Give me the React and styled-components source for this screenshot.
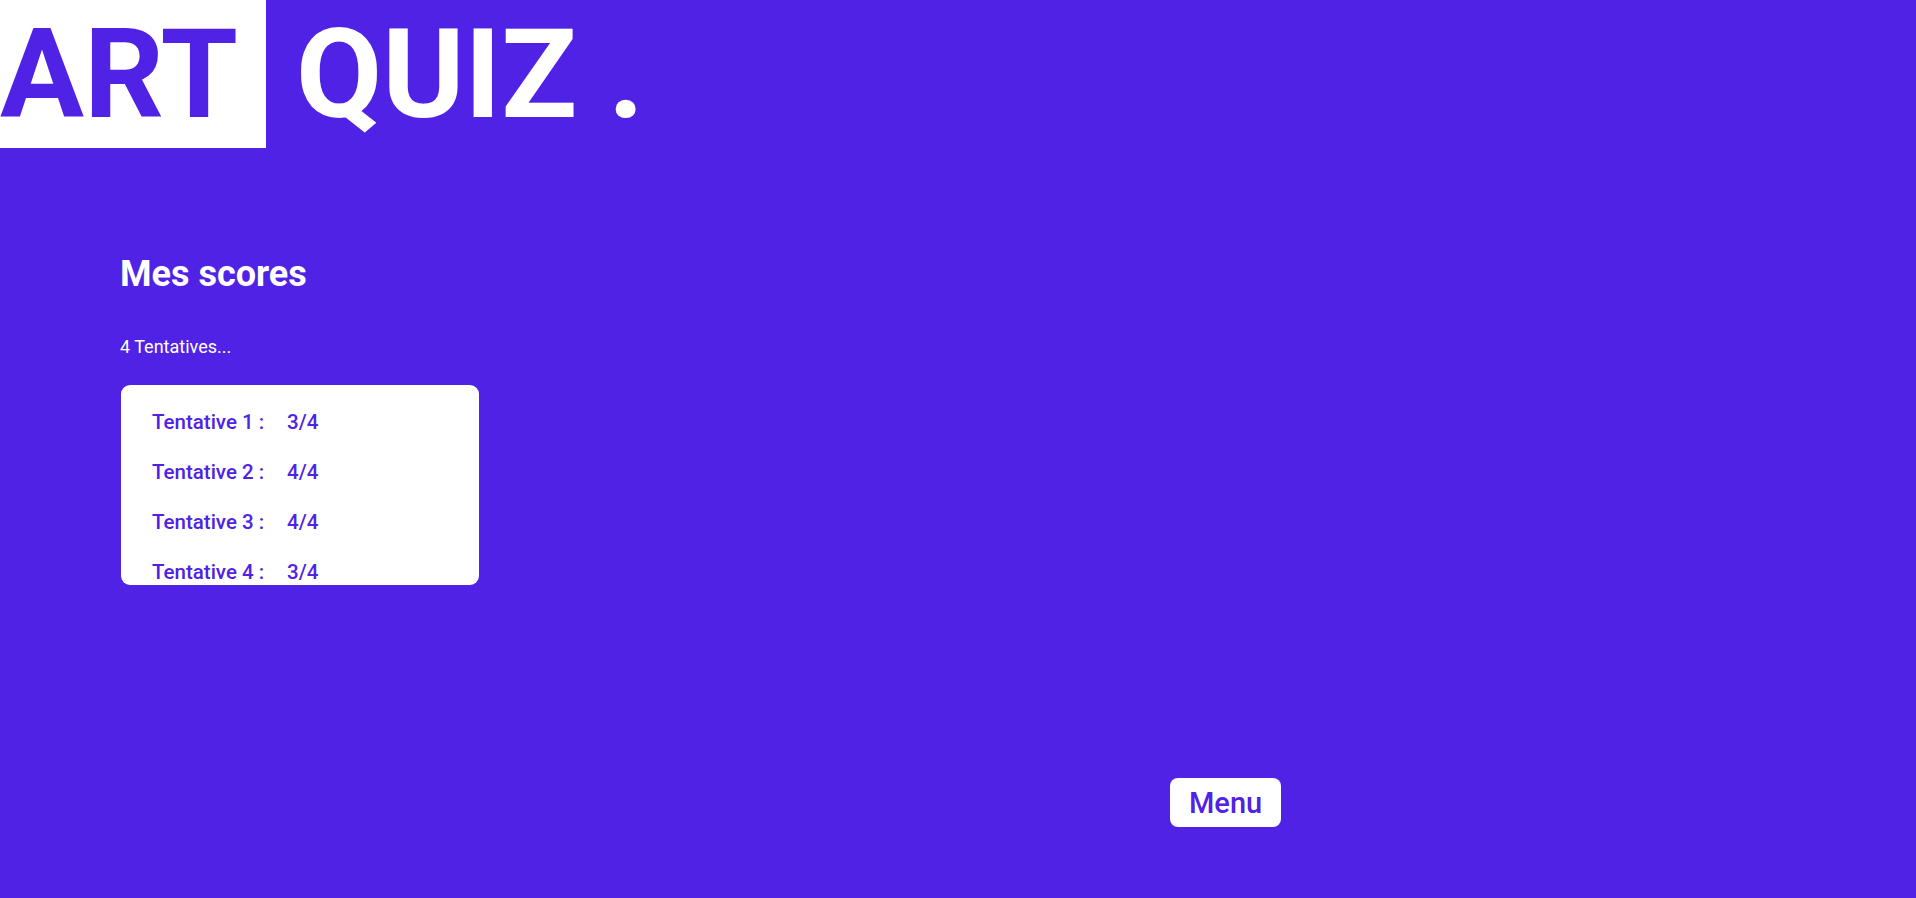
import React from 'react';
import styled, { createGlobalStyle } from 'styled-components';

const violet = '#5022e6';

const GlobalStyle = createGlobalStyle`
  html, body {
    margin: 0;
    padding: 0;
    background-color: ${violet};
    font-family: Roboto, "Liberation Sans", Arial, sans-serif;
  }
  #root {
    min-height: 100vh;
  }
`;

const Page = styled.div`
  min-height: 100vh;
  background-color: ${violet};
  display: flex;
  flex-direction: column;
`;

const Header = styled.header`
  display: flex;
  align-items: flex-start;
  height: 148px;
`;

const ArtBox = styled.div`
  width: 266px;
  height: 148px;
  flex-shrink: 0;
  background-color: white;
`;

const LogoText = styled.span`
  display: inline-block;
  font-size: 125px;
  font-weight: 700;
  line-height: 125px;
  padding-top: 12px;
  white-space: nowrap;
  color: ${({ $light }) => ($light ? 'white' : violet)};
  margin-left: ${({ $offset }) => $offset || 0}px;
`;

const Main = styled.main`
  padding: 105px 0 0 120px;
  display: flex;
  flex-direction: column;
  align-items: flex-start;
`;

const Title = styled.h2`
  margin: 0;
  font-size: 36px;
  font-weight: 700;
  color: white;
`;

const Count = styled.p`
  margin: 41px 0 0;
  font-size: 18px;
  color: white;
`;

const ScoreCard = styled.ul`
  list-style: none;
  margin: 28px 0 0 1px;
  padding: 12px 30px 0 31px;
  width: 358px;
  height: 200px;
  box-sizing: border-box;
  background-color: white;
  border-radius: 9px;
  overflow: hidden;
`;

const ScoreRow = styled.li`
  display: flex;
  height: 50px;
  line-height: 50px;
  font-size: 20.5px;
  font-weight: 500;
  color: ${violet};
`;

const Label = styled.span`
  width: 135px;
`;

const Footer = styled.div`
  padding: 193px 0 0 1170px;
`;

const MenuButton = styled.button`
  height: 49px;
  padding: 0 19px;
  border: none;
  border-radius: 8px;
  background-color: white;
  color: ${violet};
  font-family: Roboto, "Liberation Sans", Arial, sans-serif;
  font-size: 29px;
  font-weight: 500;
  cursor: pointer;
`;

const scores = [
  { id: 1, value: '3/4' },
  { id: 2, value: '4/4' },
  { id: 3, value: '4/4' },
  { id: 4, value: '3/4' },
];

const App = () => {
  return (
    <>
      <GlobalStyle />
      <Page>
        <Header>
          <ArtBox>
            <LogoText>ART</LogoText>
          </ArtBox>
          <LogoText $light $offset={30}>QUIZ .</LogoText>
        </Header>

        <Main>
          <Title>Mes scores</Title>
          <Count>{scores.length} Tentatives...</Count>
          <ScoreCard>
            {scores.map((s) => (
              <ScoreRow key={s.id}>
                <Label>Tentative {s.id} :</Label>
                <span>{s.value}</span>
              </ScoreRow>
            ))}
          </ScoreCard>
        </Main>

        <Footer>
          <MenuButton>Menu</MenuButton>
        </Footer>
      </Page>
    </>
  );
};

export default App;
